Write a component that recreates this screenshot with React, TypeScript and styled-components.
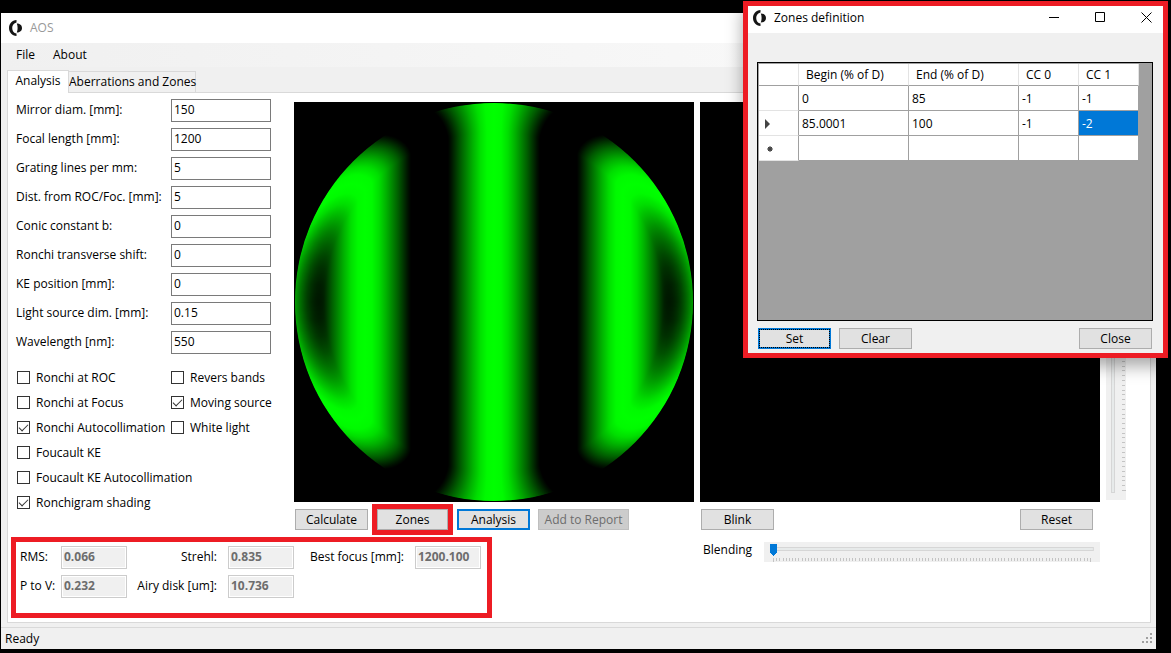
import React from "react";
import styled, { createGlobalStyle } from "styled-components";

const red = "#ed1c24";
const face = "#f0f0f0";
const line = "#d9d9d9";

const Global = createGlobalStyle`
  *, *::before, *::after { box-sizing: border-box; }
  body {
    margin: 0;
    background: #000;
    color: #000;
    font: 12px/16px "Open Sans", "Noto Sans", sans-serif;
  }
  button, input { font: inherit; color: inherit; margin: 0; }
`;

const Desktop = styled.div`
  position: relative;
  display: flex;
  min-height: 100vh;
  padding: 13px 15px 4px 1px;
`;

const Window = styled.main`
  display: flex;
  flex-direction: column;
  flex: 1;
  min-width: 0;
  background: ${face};
`;

const TitleBar = styled.header<{ $active?: boolean }>`
  display: flex;
  align-items: center;
  gap: 7px;
  height: ${(p) => (p.$active ? 27 : 30)}px;
  padding: ${(p) => (p.$active ? "0 0 4px 5px" : "0 0 0 8px")};
  background: #fff;
  color: ${(p) => (p.$active ? "#000" : "#999")};
`;

const TitleText = styled.span`
  flex: 1;
`;

const CaptionButtons = styled.span`
  display: flex;
  margin-right: -6px;
`;

const CaptionButton = styled.button`
  display: grid;
  place-items: center;
  width: 46px;
  height: 23px;
  padding: 0;
  border: 0;
  background: none;
`;

const MenuBar = styled.nav`
  display: flex;
  gap: 2px;
  height: 24px;
  padding: 4px 7px;
  background: linear-gradient(90deg, #f0f0f0, #fcfcfc);
`;

const MenuItem = styled.button`
  padding: 0 8px;
  border: 0;
  background: none;
  line-height: 16px;
`;

const TabStrip = styled.div`
  display: flex;
  align-items: flex-end;
  height: 25px;
  padding: 2px 6px 0;
`;

const Tab = styled.button<{ $selected?: boolean }>`
  position: relative;
  z-index: ${(p) => (p.$selected ? 1 : 0)};
  height: ${(p) => (p.$selected ? 23 : 21)}px;
  width: ${(p) => (p.$selected ? 62 : 127)}px;
  margin-bottom: ${(p) => (p.$selected ? -1 : 0)}px;
  padding: ${(p) => (p.$selected ? "0 0 2px" : "0")};
  border: 1px solid ${line};
  border-bottom: 0;
  border-left-width: ${(p) => (p.$selected ? 1 : 0)}px;
  background: ${(p) => (p.$selected ? "#fff" : face)};
  white-space: nowrap;
`;

const TabPage = styled.section`
  display: flex;
  flex: 1;
  margin: 0 5px 4px 6px;
  padding: 6px 0 0 3px;
  border: 1px solid ${line};
  background: #fff;
`;

const StatusBar = styled.footer`
  display: flex;
  justify-content: space-between;
  align-items: center;
  height: 22px;
  padding: 0 3px 0 4px;
  border-top: 1px solid ${line};
`;

const LeftColumn = styled.div`
  display: flex;
  flex-direction: column;
  flex: 0 0 283px;
  min-width: 0;
`;

const Fields = styled.form`
  display: grid;
  grid-template-columns: 155px 100px;
  row-gap: 6px;
  padding-left: 5px;
`;

const FieldLabel = styled.label`
  line-height: 22px;
  white-space: nowrap;
`;

const TextInput = styled.input`
  width: 100%;
  height: 23px;
  padding: 0 2px 2px;
  border: 1px solid #7a7a7a;
  background: #fff;
`;

const Checks = styled.div`
  display: grid;
  grid-template-columns: 154px 1fr;
  grid-auto-rows: 25px;
  align-items: center;
  padding: 11px 0 0 6px;
`;

const CheckLabel = styled.label<{ $second?: boolean }>`
  grid-column: ${(p) => (p.$second ? 2 : 1)};
  display: flex;
  align-items: center;
  gap: 6px;
  white-space: nowrap;
`;

const CheckBox = styled.input`
  appearance: none;
  flex: none;
  display: grid;
  place-items: center;
  width: 13px;
  height: 13px;
  border: 1px solid #333;
  background: #fff;

  &:checked::before {
    content: "";
    width: 9px;
    height: 5px;
    margin-top: -2px;
    border: solid #333;
    border-width: 0 0 1px 1px;
    transform: rotate(-45deg);
  }
`;

const Results = styled.section`
  display: grid;
  grid-template-columns: 41px 66px 101px 66px 121px 66px;
  grid-auto-rows: 23px;
  row-gap: 6px;
  align-content: start;
  width: 481px;
  height: 81px;
  margin-top: 22px;
  padding: 4px;
  border: 5px solid ${red};
`;

const ResultLabel = styled.label<{ $end?: boolean }>`
  padding-right: ${(p) => (p.$end ? 11 : 0)}px;
  text-align: ${(p) => (p.$end ? "right" : "left")};
  line-height: 22px;
  white-space: nowrap;
`;

const ResultInput = styled.input`
  width: 100%;
  height: 23px;
  padding: 0 2px 2px;
  border: 1px solid #ccc;
  box-shadow: inset 0 0 0 1px #fff;
  background: ${face};
  color: #6d6d6d;
  font-weight: 700;
`;

const ImageColumn = styled.div`
  flex: 0 1 400px;
  margin: 3px 6px 0 0;
`;

const Picture = styled.div`
  height: 400px;
  background: #000;
  overflow: hidden;

  svg { display: block; }
`;

const ButtonRow = styled.div`
  display: flex;
  align-items: center;
  gap: 8px;
  padding: 7px 7px 0 1px;
`;

const Button = styled.button<{ $focus?: boolean; $wide?: boolean }>`
  width: ${(p) => (p.$wide ? 91 : 73)}px;
  height: 21px;
  padding: 0;
  border: ${(p) => (p.$focus ? "2px solid #0078d7" : "1px solid #adadad")};
  background: #e1e1e1;
  line-height: 16px;
  white-space: nowrap;

  &:disabled {
    border-color: #bfbfbf;
    background: #ccc;
    color: #6d6d6d;
  }
`;

const DefaultButton = styled(Button)`
  outline: 1px dotted #000;
  outline-offset: -2px;
`;

const Marked = styled.span`
  display: flex;
  margin: -5px -4px;
  border: 5px solid ${red};
  padding: 0;

  ${Button} { width: 71px; }
`;

const Spacer = styled.span`
  flex: 1;
`;

const BlendRow = styled.div`
  display: flex;
  align-items: flex-start;
  gap: 12px;
  padding: 12px 0 0 3px;
`;

const SliderBox = styled.span`
  position: relative;
  flex: 1;
  height: 20px;
  background: ${face};
`;

const Ticks = styled.svg`
  position: absolute;
  inset: 0;
  width: 100%;
  height: 100%;
`;

const Range = styled.input`
  position: absolute;
  inset: 0;
  width: 100%;
  height: 100%;
  opacity: 0;
`;

const VerticalSlider = styled.span`
  position: relative;
  flex: none;
  width: 20px;
  height: 401px;
  background: ${face};
`;

const VerticalRange = styled(Range)`
  writing-mode: vertical-lr;
`;

const Dialog = styled.section`
  position: absolute;
  top: 1px;
  right: 3px;
  display: flex;
  flex-direction: column;
  width: 425px;
  height: 357px;
  border: 5px solid ${red};
  background: ${face};
  box-shadow: 0 8px 16px rgba(0, 0, 0, 0.35);
`;

const GridArea = styled.div`
  flex: 1;
  margin: 29px 10px 0 9px;
  padding: 1px;
  border: 1px solid #000;
  background: #a0a0a0;
`;

const DataTable = styled.table`
  width: 380px;
  table-layout: fixed;
  border-collapse: separate;
  border-spacing: 0;
  background: #fff;
`;

const HeadCell = styled.th<{ $w: number }>`
  width: ${(p) => p.$w}px;
  height: 22px;
  padding: 0 7px;
  border: solid #a0a0a0;
  border-width: 0 1px 1px 0;
  border-right-color: #e3e3e3;
  font-weight: 400;
  text-align: left;
  white-space: nowrap;
`;

const RowHead = styled.th`
  height: 25px;
  padding: 2px 0 0 6px;
  border: solid #e3e3e3;
  border-width: 0 1px 1px 0;
  border-right-color: #a0a0a0;
  text-align: left;

  svg { display: block; }
`;

const Cell = styled.td<{ $selected?: boolean }>`
  height: 25px;
  padding: 2px 3px 0;
  border: solid #a0a0a0;
  border-width: 0 1px 1px 0;
  background: ${(p) => (p.$selected ? "#0078d7" : "#fff")};
  color: ${(p) => (p.$selected ? "#fff" : "#000")};
`;

const DialogButtons = styled.div`
  display: flex;
  gap: 8px;
  padding: 7px 11px 4px 10px;
`;

const Logo = () => (
  <svg width="14" height="16" viewBox="0 0 14 16" aria-hidden="true">
    <path d="M7.500 0v2.400C4.800 3 3.200 5 3.200 8s1.600 5 4.300 5.600V16C3 15.600 0 12.400 0 8S3 .4 7.500 0z" fill="#151515" />
    <path d="M7.800 3.500c3 0 5.200 1.600 5.200 4.500s-2.200 4.500-5.200 4.500c.6-1.500.8-3 .8-4.500s-.2-3-.8-4.500z" fill="#151515" />
  </svg>
);

/* Light passed by the grating as a function of the ray's displacement. */
const PERIOD = 129;
const falloff: [number, number][] = [
  [0, 255],
  [7, 250],
  [14, 222],
  [21, 178],
  [27, 136],
  [33, 94],
  [39, 48],
  [43, 18],
  [46, 0],
];
const bandStops: [number, number][] = [
  ...falloff,
  ...falloff.map(([at, level]): [number, number] => [PERIOD - at, level]).reverse(),
];

const INNER = 170;
const OUTER = 199;
const rings = Array.from({ length: (OUTER - INNER) * 2 }, (_, i) => {
  const r = OUTER - i / 2;
  const bend = 0.23 * Math.pow((r - INNER) / (OUTER - INNER), 1.4);
  return { r, period: PERIOD / (1 - bend) };
});

const BandGradient = ({ id, period }: { id: string; period: number }) => (
  <linearGradient id={id} gradientUnits="userSpaceOnUse" x1="0" y1="0" x2={period} y2="0" spreadMethod="repeat">
    {bandStops.map(([at, level]) => (
      <stop key={at} offset={at / PERIOD} stopColor={`rgb(0,${level},0)`} />
    ))}
  </linearGradient>
);

/* Inner zone gives straight bands; each outer ring bends them a little more. */
const Ronchigram = () => (
  <svg width="100%" height="400" viewBox="-200 -200 400 400" role="img" aria-label="Ronchigram">
    <defs>
      <BandGradient id="inner" period={PERIOD} />
      {rings.map((ring, i) => (
        <BandGradient key={i} id={`ring${i}`} period={ring.period} />
      ))}
    </defs>
    {rings.map((ring, i) => (
      <circle key={i} r={ring.r} fill={`url(#ring${i})`} />
    ))}
    <circle r={INNER} fill="url(#inner)" />
  </svg>
);

const fields: [string, string][] = [
  ["Mirror diam. [mm]:", "150"],
  ["Focal length [mm]:", "1200"],
  ["Grating lines per mm:", "5"],
  ["Dist. from ROC/Foc. [mm]:", "5"],
  ["Conic constant b:", "0"],
  ["Ronchi transverse shift:", "0"],
  ["KE position [mm]:", "0"],
  ["Light source dim. [mm]:", "0.15"],
  ["Wavelength [nm]:", "550"],
];

const checks: { text: string; on?: boolean; second?: boolean }[] = [
  { text: "Ronchi at ROC" },
  { text: "Revers bands", second: true },
  { text: "Ronchi at Focus" },
  { text: "Moving source", on: true, second: true },
  { text: "Ronchi Autocollimation", on: true },
  { text: "White light", second: true },
  { text: "Foucault KE" },
  { text: "Foucault KE Autocollimation" },
  { text: "Ronchigram shading", on: true },
];

const results: { text: string; value: string; end?: boolean }[] = [
  { text: "RMS:", value: "0.066" },
  { text: "Strehl:", value: "0.835", end: true },
  { text: "Best focus [mm]:", value: "1200.100", end: true },
  { text: "P to V:", value: "0.232" },
  { text: "Airy disk [um]:", value: "10.736", end: true },
];

const zones = [
  ["0", "85", "-1", "-1"],
  ["85.0001", "100", "-1", "-2"],
  ["", "", "", ""],
];

const HorizontalTicks = () => (
  <Ticks viewBox="0 0 336 20" preserveAspectRatio="none" shapeRendering="crispEdges">
    <rect x="6.500" y="5.500" width="323" height="3" fill="#e7eaea" stroke="#d6d6d6" />
    {Array.from({ length: 101 }, (_, i) => (
      <rect key={i} x={9 + Math.round(i * 3.17)} y="16" width="1" height={i % 100 ? 3 : 4} fill="#c4c4c4" />
    ))}
    <path d="M6 2h7v9l-3.500 3L6 11z" fill="#0078d7" />
  </Ticks>
);

const VerticalTicks = () => (
  <Ticks viewBox="0 0 20 401" shapeRendering="crispEdges">
    <rect x="5.500" y="6.500" width="3" height="387" fill="#e7eaea" stroke="#d6d6d6" />
    {Array.from({ length: 81 }, (_, i) => (
      <rect key={i} x="16" y={391 - Math.round(i * 4.78)} width={i ? 3 : 4} height="1" fill="#c4c4c4" />
    ))}
  </Ticks>
);

export default function App() {
  return (
    <Desktop>
      <Global />
      <Window>
        <TitleBar>
          <Logo />
          <TitleText>AOS</TitleText>
        </TitleBar>
        <MenuBar>
          <MenuItem>File</MenuItem>
          <MenuItem>About</MenuItem>
        </MenuBar>
        <TabStrip role="tablist">
          <Tab role="tab" aria-selected="true" $selected>Analysis</Tab>
          <Tab role="tab" aria-selected="false">Aberrations and Zones</Tab>
        </TabStrip>
        <TabPage>
          <LeftColumn>
            <Fields>
              {fields.map(([text, value], i) => (
                <React.Fragment key={text}>
                  <FieldLabel htmlFor={`field${i}`}>{text}</FieldLabel>
                  <TextInput id={`field${i}`} defaultValue={value} />
                </React.Fragment>
              ))}
            </Fields>
            <Checks>
              {checks.map((c) => (
                <CheckLabel key={c.text} $second={c.second}>
                  <CheckBox type="checkbox" defaultChecked={c.on} />
                  {c.text}
                </CheckLabel>
              ))}
            </Checks>
            <Results>
              {results.map((r, i) => (
                <React.Fragment key={r.text}>
                  <ResultLabel htmlFor={`result${i}`} $end={r.end}>{r.text}</ResultLabel>
                  <ResultInput id={`result${i}`} defaultValue={r.value} disabled />
                </React.Fragment>
              ))}
            </Results>
          </LeftColumn>
          <ImageColumn>
            <Picture><Ronchigram /></Picture>
            <ButtonRow>
              <Button>Calculate</Button>
              <Marked><Button>Zones</Button></Marked>
              <Button $focus>Analysis</Button>
              <Button $wide disabled>Add to Report</Button>
            </ButtonRow>
          </ImageColumn>
          <ImageColumn>
            <Picture />
            <ButtonRow>
              <Button>Blink</Button>
              <Spacer />
              <Button>Reset</Button>
            </ButtonRow>
            <BlendRow>
              <label htmlFor="blending">Blending</label>
              <SliderBox>
                <HorizontalTicks />
                <Range id="blending" type="range" defaultValue={0} />
              </SliderBox>
            </BlendRow>
          </ImageColumn>
          <VerticalSlider>
            <VerticalTicks />
            <VerticalRange type="range" aria-label="Zoom" />
          </VerticalSlider>
        </TabPage>
        <StatusBar>
          Ready
          <svg width="11" height="11" viewBox="0 0 11 11" aria-hidden="true">
            <path d="M8 0h2v2h-2zM4 4h2v2h-2zM8 4h2v2h-2zM0 8h2v2h-2zM4 8h2v2h-2zM8 8h2v2h-2z" fill="#a0a0a0" />
          </svg>
        </StatusBar>
      </Window>
      <Dialog role="dialog" aria-label="Zones definition">
        <TitleBar $active>
          <Logo />
          <TitleText>Zones definition</TitleText>
          <CaptionButtons>
            <CaptionButton aria-label="Minimize">
              <svg width="11" height="11"><path d="M0 5.500h10" stroke="#000" /></svg>
            </CaptionButton>
            <CaptionButton aria-label="Maximize">
              <svg width="11" height="11"><path d="M.5.5h9v9h-9z" fill="none" stroke="#000" /></svg>
            </CaptionButton>
            <CaptionButton aria-label="Close window">
              <svg width="11" height="11"><path d="M.5.5l10 10M10.500.5l-10 10" stroke="#000" /></svg>
            </CaptionButton>
          </CaptionButtons>
        </TitleBar>
        <GridArea>
          <DataTable>
            <thead>
              <tr>
                <HeadCell $w={40} />
                <HeadCell $w={110}>Begin (% of D)</HeadCell>
                <HeadCell $w={110}>End (% of D)</HeadCell>
                <HeadCell $w={60}>CC 0</HeadCell>
                <HeadCell $w={60}>CC 1</HeadCell>
              </tr>
            </thead>
            <tbody>
              {zones.map((row, i) => (
                <tr key={i}>
                  <RowHead scope="row">
                    {i === 1 && (
                      <svg width="6" height="10"><path d="M0 0l5 5-5 5z" fill="#444" /></svg>
                    )}
                    {i === 2 && (
                      <svg width="10" height="8">
                        <circle cx="5" cy="4" r="2" fill="#444" />
                        <path d="M5 1v6M2 4h6M3 2l4 4M7 2L3 6" stroke="#444" />
                      </svg>
                    )}
                  </RowHead>
                  {row.map((value, j) => (
                    <Cell key={j} $selected={i === 1 && j === 3}>{value}</Cell>
                  ))}
                </tr>
              ))}
            </tbody>
          </DataTable>
        </GridArea>
        <DialogButtons>
          <DefaultButton $focus>Set</DefaultButton>
          <Button>Clear</Button>
          <Spacer />
          <Button>Close</Button>
        </DialogButtons>
      </Dialog>
    </Desktop>
  );
}
